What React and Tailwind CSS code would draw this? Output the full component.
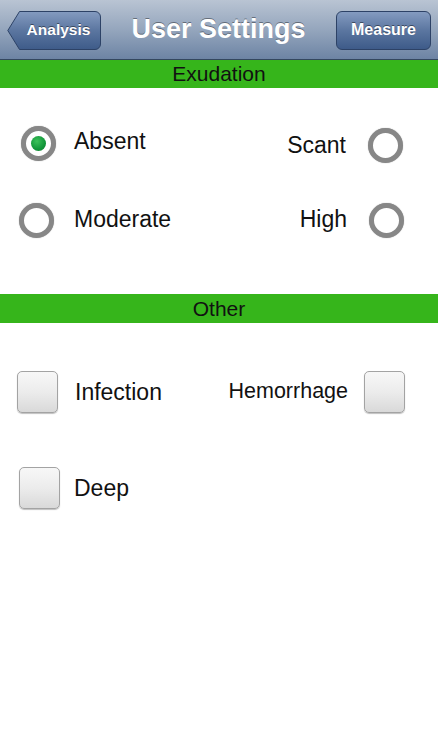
import React from 'react'

const font = { fontFamily: '"Liberation Sans", Arial, sans-serif' }

const Radio = ({ checked }) => (
    <div className="w-[35px] h-[35px] rounded-full border-[5px] border-[#878787] bg-white flex items-center justify-center shadow-[0_0_1px_rgba(0,0,0,0.4)]">
        {checked && (
            <div className="w-[15px] h-[15px] rounded-full bg-[radial-gradient(circle_at_40%_35%,#3cc25a,#12963a_60%,#0c7f2e)]" />
        )}
    </div>
)

const Checkbox = () => (
    <div className="w-[41px] h-[42px] rounded-[5px] border border-[#a3a3a3] bg-linear-to-b from-[#f7f7f7] via-[#ececec] to-[#d9d9d9] shadow-[0_1px_1px_rgba(0,0,0,0.25)]" />
)

const SectionBar = ({ title, h }) => (
    <div className={`${h} bg-[#36b51b] flex items-center justify-center text-[21px] text-[#111]`}>
        {title}
    </div>
)

export default function App() {
    return (
        <div className="w-full h-[750px] bg-white overflow-hidden" style={font}>
            {/* nav bar */}
            <div className="h-[60px] border-b border-[#34475f] bg-linear-to-b from-[#b9c4d3] via-[#95a6bd] to-[#6d84a4] flex items-center justify-between px-[7px] pt-px">
                <div className="relative w-[94px] h-[39px]">
                    <svg width="94" height="39" viewBox="0 0 94 39" className="absolute inset-0">
                        <defs>
                            <linearGradient id="bb" x1="0" y1="0" x2="0" y2="1">
                                <stop offset="0" stopColor="#849bc0" />
                                <stop offset="0.5" stopColor="#5b76a0" />
                                <stop offset="1" stopColor="#3e5b89" />
                            </linearGradient>
                        </defs>
                        <path d="M12.5 0.5 H88 a5.5 5.5 0 0 1 5.5 5.5 V33 a5.5 5.5 0 0 1 -5.5 5.5 H12.5 L0.8 19.5 Z" fill="url(#bb)" stroke="#2d4266" strokeWidth="1" />
                    </svg>
                    <span className="absolute inset-0 flex items-center justify-center pl-[9px] text-white font-bold text-[15.5px] [text-shadow:0_-1px_0_rgba(0,0,0,0.45)]">
                        Analysis
                    </span>
                </div>
                <div className="text-white font-bold text-[27px] -mt-px [text-shadow:0_-1px_0_rgba(0,0,0,0.4)]">
                    User Settings
                </div>
                <div className="w-[95px] h-[39px] rounded-[6px] border border-[#2d4266] bg-linear-to-b from-[#849bc0] via-[#5b76a0] to-[#3e5b89] flex items-center justify-center text-white font-bold text-[16px] [text-shadow:0_-1px_0_rgba(0,0,0,0.45)]">
                    Measure
                </div>
            </div>

            <SectionBar title="Exudation" h="h-[28px]" />

            {/* radios */}
            <div className="h-[206px] flex flex-col pt-[35px] gap-[37px] text-[23px] text-[#111]">
                <div className="h-[40px] flex items-center justify-between pl-[21px] pr-[35px]">
                    <div className="flex items-center gap-[18px]">
                        <Radio checked />
                        <span className="-mt-[3px]">Absent</span>
                    </div>
                    <div className="flex items-center gap-[22px] mt-[4px]">
                        <span>Scant</span>
                        <Radio />
                    </div>
                </div>
                <div className="h-[40px] flex items-center justify-between pl-[19px] pr-[34px]">
                    <div className="flex items-center gap-[20px]">
                        <Radio />
                        <span className="-mt-[2px]">Moderate</span>
                    </div>
                    <div className="flex items-center gap-[22px]">
                        <span className="-mt-[2px]">High</span>
                        <Radio />
                    </div>
                </div>
            </div>

            <SectionBar title="Other" h="h-[29px]" />

            {/* checkboxes */}
            <div className="flex flex-col pt-[48px] gap-[54px] text-[23px] text-[#111]">
                <div className="h-[42px] flex items-center justify-between pl-[17px] pr-[33px]">
                    <div className="flex items-center gap-[17px]">
                        <Checkbox />
                        <span>Infection</span>
                    </div>
                    <div className="flex items-center gap-[16px]">
                        <span className="text-[21.5px] -mt-[2px]">Hemorrhage</span>
                        <Checkbox />
                    </div>
                </div>
                <div className="h-[42px] flex items-center pl-[19px]">
                    <div className="flex items-center gap-[14px]">
                        <Checkbox />
                        <span>Deep</span>
                    </div>
                </div>
            </div>
        </div>
    )
}
